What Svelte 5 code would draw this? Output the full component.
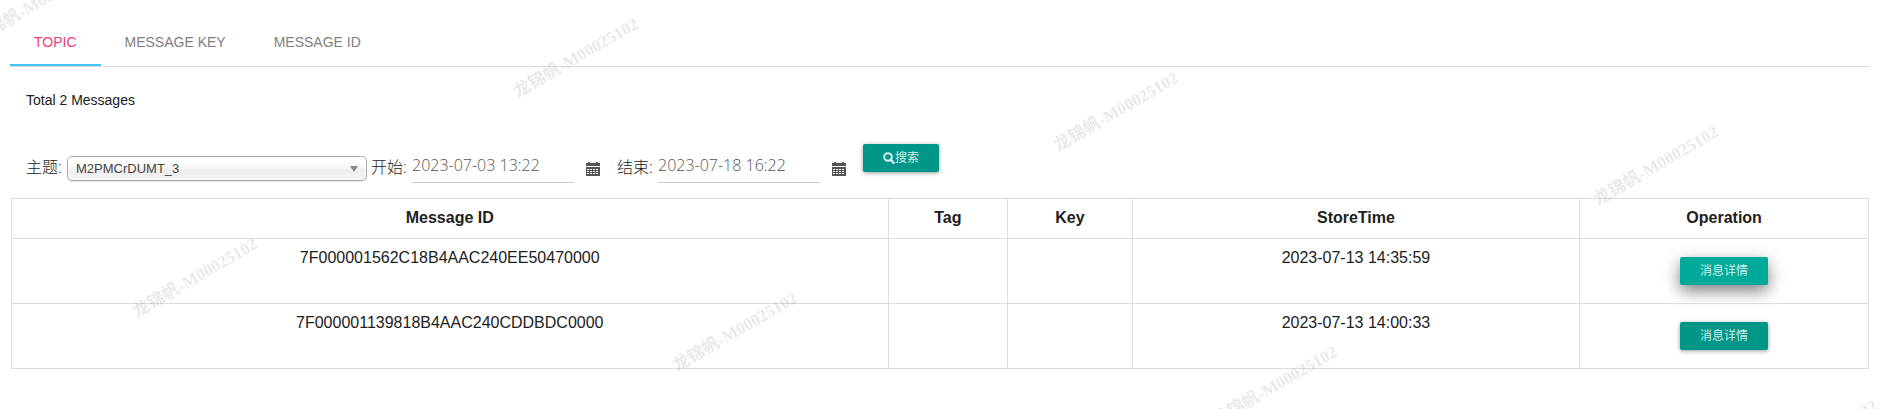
<script>
  const tabs = ['Topic', 'Message Key', 'Message ID'];
  let activeTab = $state('Topic');

  const topics = ['M2PMCrDUMT_3'];
  let topic = $state('M2PMCrDUMT_3');
  let begin = $state('2023-07-03 13:22');
  let end = $state('2023-07-18 16:22');

  const messages = [
    { id: '7F000001562C18B4AAC240EE50470000', tag: '', key: '', storeTime: '2023-07-13 14:35:59' },
    { id: '7F000001139818B4AAC240CDDBDC0000', tag: '', key: '', storeTime: '2023-07-13 14:00:33' }
  ];
  let focusedId = $state(messages[0].id);

  const watermark = '龙锦帆-M00025102';
  const marks = [
    { x: 35, y: 2 },
    { x: 575, y: 56 },
    { x: 1115, y: 110 },
    { x: 1655, y: 164 },
    { x: 194, y: 276 },
    { x: 734, y: 330 },
    { x: 1274, y: 384 },
    { x: 1814, y: 438 }
  ];
</script>

{#snippet calendar()}
  <svg class="calendar" viewBox="0 0 14 14" aria-hidden="true">
    <path fill="#555" d="M0 1h2V0h2v1h6V0h2v1h2v3H0z" />
    <path fill="#555" d="M0 5h14v9H0z" />
    <path stroke="#fff" stroke-width="1" stroke-dasharray="2 1" d="M1 7.5h12M1 9.5h12M1 11.5h12" />
  </svg>
{/snippet}

<main class="page">
  <div class="tabs" role="tablist">
    {#each tabs as tab}
      <button
        class="tab"
        class:active={tab === activeTab}
        role="tab"
        aria-selected={tab === activeTab}
        onclick={() => (activeTab = tab)}>{tab}</button>
    {/each}
  </div>

  <h5 class="total">Total {messages.length} Messages</h5>

  <form class="filters" onsubmit={(e) => e.preventDefault()}>
    <div class="field">
      <label for="topic">主题:</label>
      <div class="chosen">
        <select id="topic" bind:value={topic}>
          {#each topics as item}
            <option>{item}</option>
          {/each}
        </select>
      </div>
    </div>
    <div class="field">
      <label for="begin">开始:</label>
      <input id="begin" type="text" bind:value={begin} />
      <button class="picker" type="button" aria-label="开始">{@render calendar()}</button>
    </div>
    <div class="field">
      <label for="end">结束:</label>
      <input id="end" type="text" bind:value={end} />
      <button class="picker" type="button" aria-label="结束">{@render calendar()}</button>
    </div>
    <button class="btn search" type="submit">
      <svg class="glass" viewBox="0 0 12 12" aria-hidden="true">
        <circle cx="5" cy="5" r="3.8" fill="none" stroke="currentColor" stroke-width="2" />
        <path d="M7.8 7.8l3 3" stroke="currentColor" stroke-width="2.4" stroke-linecap="round" />
      </svg>搜索
    </button>
  </form>

  <table>
    <colgroup>
      <col class="col-id" />
      <col class="col-tag" />
      <col class="col-key" />
      <col class="col-time" />
      <col />
    </colgroup>
    <thead>
      <tr>
        <th>Message ID</th>
        <th>Tag</th>
        <th>Key</th>
        <th>StoreTime</th>
        <th>Operation</th>
      </tr>
    </thead>
    <tbody>
      {#each messages as item}
        <tr>
          <td>{item.id}</td>
          <td>{item.tag}</td>
          <td>{item.key}</td>
          <td>{item.storeTime}</td>
          <td>
            <button
              class="btn detail"
              class:focused={item.id === focusedId}
              type="button"
              onclick={() => (focusedId = item.id)}>消息详情</button>
          </td>
        </tr>
      {/each}
    </tbody>
  </table>
</main>

<div class="watermarks" aria-hidden="true">
  {#each marks as mark}
    <span style="left: {mark.x}px; top: {mark.y}px">{watermark}</span>
  {/each}
</div>

<style>
  :global(body) {
    margin: 0;
    background: #fff;
    color: #212121;
    font-family: 'Liberation Sans', 'Noto Sans CJK SC', sans-serif;
    font-size: 16px;
  }

  .page {
    padding: 18px 16px 0 10px;
  }

  button,
  input,
  select {
    margin: 0;
    font-family: inherit;
  }

  /* Tabs */
  .tabs {
    display: flex;
    border-bottom: 1px solid #ddd;
  }

  .tab {
    height: 48px;
    padding: 0 24px;
    border: 0;
    background: none;
    color: #808080;
    font-size: 14px;
    line-height: 48px;
    text-transform: uppercase;
    cursor: pointer;
  }

  .tab.active {
    color: #ec407a;
    box-shadow: inset 0 -2px 0 #40c4ff;
  }

  .total {
    margin: 23px 16px 0;
    font-size: 14px;
    font-weight: 400;
    line-height: 20px;
  }

  /* Search form */
  .filters {
    display: flex;
    align-items: flex-end;
    margin: 34px 16px 15px;
    height: 39px;
  }

  .field {
    display: flex;
    align-items: flex-end;
  }

  .field label {
    width: 41px;
    padding-bottom: 4px;
    color: #212121;
    font-family: 'Open Sans', 'Noto Sans CJK SC', sans-serif;
    font-weight: 300;
    line-height: 24px;
    white-space: nowrap;
  }

  .chosen {
    position: relative;
    padding: 0 4px 2px 0;
  }

  .chosen::after {
    content: '';
    position: absolute;
    top: 10px;
    right: 13px;
    border: 4px solid transparent;
    border-top: 6px solid #888;
    border-bottom: 0;
    pointer-events: none;
  }

  .chosen select {
    display: block;
    width: 300px;
    height: 25px;
    padding: 0 8px;
    appearance: none;
    border: 1px solid #aaa;
    border-radius: 5px;
    background: linear-gradient(#fff 20%, #f6f6f6 50%, #eee 52%, #f4f4f4 100%);
    box-shadow: 0 0 3px #fff inset, 0 1px 1px rgba(0, 0, 0, 0.1);
    color: #444;
    font-size: 13px;
  }

  .field input {
    box-sizing: border-box;
    width: 162px;
    height: 35px;
    padding: 0;
    border: 0;
    border-bottom: 1px solid #ccc;
    background: transparent;
    color: #555;
    font-family: 'Open Sans', sans-serif;
    font-size: 16px;
    font-weight: 300;
    outline: none;
  }

  .picker {
    padding: 0 17px 7px 12px;
    border: 0;
    background: none;
    cursor: pointer;
  }

  .calendar {
    display: block;
    width: 14px;
    height: 14px;
  }

  .btn {
    height: 28px;
    padding: 0 20px;
    border: 0;
    border-radius: 2px;
    background: #009688;
    box-shadow: 0 1px 4px rgba(0, 0, 0, 0.4);
    color: rgba(255, 255, 255, 0.84);
    font-size: 12px;
    line-height: 28px;
    cursor: pointer;
  }

  .btn.focused,
  .btn:hover {
    background: #00aa9a;
    box-shadow: 0 6px 16px rgba(0, 0, 0, 0.5);
  }

  .search {
    display: flex;
    align-items: center;
    align-self: flex-start;
  }

  .glass {
    width: 12px;
    height: 12px;
  }

  /* Message list */
  table {
    width: calc(100% - 2px);
    margin-left: 1px;
    border-collapse: collapse;
    table-layout: fixed;
    text-align: center;
  }

  .col-id {
    width: 47.2%;
  }

  .col-tag {
    width: 6.45%;
  }

  .col-key {
    width: 6.7%;
  }

  .col-time {
    width: 24.1%;
  }

  th,
  td {
    padding: 8px 8px 10px;
    border: 1px solid #ddd;
    line-height: 21px;
    vertical-align: top;
  }

  .detail {
    display: block;
    margin: 10px auto 8px;
  }

  /* User stamp repeated over the whole window */
  .watermarks {
    position: fixed;
    inset: 0;
    overflow: hidden;
    pointer-events: none;
  }

  .watermarks span {
    position: absolute;
    transform: translate(-50%, -50%) rotate(-30deg);
    color: rgba(0, 0, 0, 0.09);
    font-family: 'Liberation Serif', 'Noto Sans CJK SC', serif;
    font-size: 17px;
    font-weight: 700;
    white-space: nowrap;
  }
</style>
